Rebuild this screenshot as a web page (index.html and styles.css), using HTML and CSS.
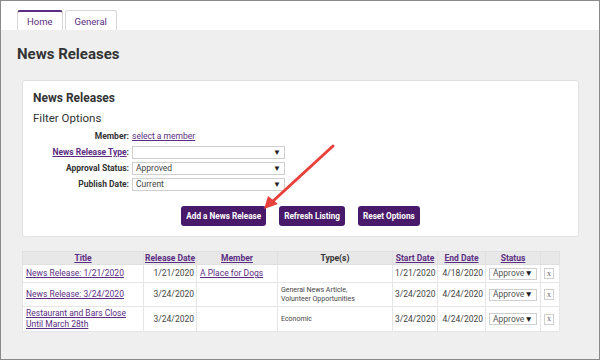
FILE: index.html
```html
<!DOCTYPE html>
<html>
<head>
    <meta name="viewport" content="width=device-width, initial-scale=1.0">
    <title>News Releases</title>
    <link rel="stylesheet" href="styles.css">
</head>

<body>
    <div class="frame">
        <div class="tabs">
            <a class="tab active">Home</a>
            <a class="tab">General</a>
        </div>

        <div class="content">
            <h1>News Releases</h1>

            <div class="card">
                <h2>News Releases</h2>
                <h3>Filter Options</h3>

                <div class="filter-form">
                    <span class="label">Member:</span>
                    <span><a class="link">select a member</a></span>

                    <span class="label"><a class="link">News Release Type</a>:</span>
                    <span class="select"><span></span><i>&#9660;</i></span>

                    <span class="label">Approval Status:</span>
                    <span class="select"><span>Approved</span><i>&#9660;</i></span>

                    <span class="label">Publish Date:</span>
                    <span class="select"><span>Current</span><i>&#9660;</i></span>
                </div>

                <div class="buttons">
                    <button class="btn">Add a News Release</button>
                    <button class="btn">Refresh Listing</button>
                    <button class="btn">Reset Options</button>
                </div>
            </div>

            <table class="releases">
                <colgroup>
                    <col style="width:121px">
                    <col style="width:53px">
                    <col style="width:81px">
                    <col style="width:115px">
                    <col style="width:45px">
                    <col style="width:48px">
                    <col style="width:55px">
                    <col style="width:19px">
                </colgroup>
                <thead>
                    <tr>
                        <th><a class="link">Title</a></th>
                        <th><a class="link">Release Date</a></th>
                        <th><a class="link">Member</a></th>
                        <th>Type(s)</th>
                        <th><a class="link">Start Date</a></th>
                        <th><a class="link">End Date</a></th>
                        <th><a class="link">Status</a></th>
                        <th></th>
                    </tr>
                </thead>
                <tbody>
                    <tr class="row-1">
                        <td><a class="link">News Release: 1/21/2020</a></td>
                        <td class="num">1/21/2020</td>
                        <td><a class="link">A Place for Dogs</a></td>
                        <td class="types"></td>
                        <td class="num">1/21/2020</td>
                        <td class="num">4/18/2020</td>
                        <td><span class="status">Approve <i>&#9660;</i></span></td>
                        <td><span class="remove">x</span></td>
                    </tr>
                    <tr class="row-2">
                        <td><a class="link">News Release: 3/24/2020</a></td>
                        <td class="num">3/24/2020</td>
                        <td></td>
                        <td class="types">General News Article,<br>Volunteer Opportunities</td>
                        <td class="num">3/24/2020</td>
                        <td class="num">4/24/2020</td>
                        <td><span class="status">Approve <i>&#9660;</i></span></td>
                        <td><span class="remove">x</span></td>
                    </tr>
                    <tr class="row-3">
                        <td><a class="link">Restaurant and Bars Close Until March 28th</a></td>
                        <td class="num">3/24/2020</td>
                        <td></td>
                        <td class="types">Economic</td>
                        <td class="num">3/24/2020</td>
                        <td class="num">4/24/2020</td>
                        <td><span class="status">Approve <i>&#9660;</i></span></td>
                        <td><span class="remove">x</span></td>
                    </tr>
                </tbody>
            </table>
        </div>

        <!-- callout arrow drawn over the card -->
        <svg class="callout" width="600" height="360" viewBox="0 0 600 360">
            <line x1="333" y1="146" x2="272" y2="202" stroke="#e8413b" stroke-width="3" stroke-linecap="round"/>
            <polygon points="264,209 268,196 278,204" fill="#e8413b"/>
        </svg>
    </div>
</body>

</html>
```

FILE: styles.css
```css
html, body {
    margin: 0;
    padding: 0;
}

body {
    font-family: Roboto, "Liberation Sans", Arial, sans-serif;
    color: #333;
}

.frame {
    position: relative;
    width: 600px;
    height: 360px;
    box-sizing: border-box;
    border: 1px solid #8a8a8a;
    background-color: #efefef;
    overflow: hidden;
}

.tabs {
    display: flex;
    align-items: flex-end;
    gap: 2px;
    height: 29px;
    padding-left: 16px;
    background-color: #fff;
    box-sizing: border-box;
}

.tab {
    display: block;
    height: 20px;
    box-sizing: border-box;
    padding: 5px 9px 0;
    border: 1px solid #d6d6d6;
    border-bottom: none;
    border-radius: 3px 3px 0 0;
    font-size: 9.5px;
    color: #5b2d83;
    background-color: #fff;
}

.tab.active {
    border-top: 2px solid #5b2d83;
    padding-top: 4px;
}

.content {
    padding: 14px 20px 0 21px;
}

h1 {
    margin: 0 0 16px -5px;
    font-size: 15px;
    font-weight: 700;
    color: #333;
    line-height: 20px;
}

.card {
    width: 557px;
    box-sizing: border-box;
    background-color: #fff;
    border: 1px solid #e2e2e2;
    border-radius: 3px;
    padding: 9px 10px 10px 10px;
}

h2 {
    margin: 0;
    font-size: 12px;
    font-weight: 700;
    line-height: 16px;
    color: #333;
}

h3 {
    margin: 4px 0 2px;
    font-size: 11.5px;
    font-weight: 400;
    line-height: 16px;
    color: #333;
}

.filter-form {
    display: grid;
    grid-template-columns: 96px 153px;
    grid-auto-rows: 16px;
    column-gap: 3px;
    align-items: center;
    font-size: 8.5px;
}

.label {
    text-align: right;
    font-weight: 700;
    color: #333;
}

.link {
    color: #5b2d83;
    text-decoration: underline;
}

.select {
    display: flex;
    justify-content: space-between;
    align-items: center;
    height: 13px;
    box-sizing: border-box;
    border: 1px solid #cfcfcf;
    padding: 0 3px;
    font-size: 8.5px;
    color: #444;
}

.select i {
    font-style: normal;
    font-size: 8px;
    color: #222;
}

.buttons {
    display: flex;
    justify-content: center;
    gap: 13px;
    margin-top: 14px;
}

.btn {
    height: 20px;
    padding: 0 5px;
    border: none;
    border-radius: 3px;
    background-color: #4a1a6a;
    color: #fff;
    font-family: Roboto, "Liberation Sans", Arial, sans-serif;
    font-size: 8.2px;
    font-weight: 700;
}

.releases {
    margin-top: 14px;
    width: 537px;
    table-layout: fixed;
    border-collapse: collapse;
    font-size: 8.5px;
    background-color: #fff;
}

.releases th {
    height: 12px;
    padding: 0 1px;
    background-color: #e8e8e8;
    border: 1px solid #e0e0e0;
    font-weight: 700;
    text-align: center;
    white-space: nowrap;
    color: #333;
}

.releases td {
    padding: 0 3px;
    border: 1px solid #e6e6e6;
    color: #444;
    line-height: 11px;
}

.row-1 td {
    height: 17px;
}

.row-2 td {
    height: 23px;
}

.row-3 td {
    height: 24px;
}

.releases td.num {
    text-align: right;
    padding: 0 2px;
    white-space: nowrap;
}

.releases td.types {
    font-size: 7px;
    line-height: 8.5px;
}

.status {
    display: flex;
    justify-content: space-between;
    align-items: center;
    height: 12px;
    box-sizing: border-box;
    border: 1px solid #cfcfcf;
    padding: 0 3px;
    color: #555;
}

.status i {
    font-style: normal;
    font-size: 8.5px;
    color: #222;
}

.remove {
    display: flex;
    justify-content: center;
    align-items: center;
    width: 10px;
    height: 11px;
    box-sizing: border-box;
    border: 1px solid #cfcfcf;
    font-family: "Liberation Serif", serif;
    font-size: 8px;
    line-height: 8px;
    color: #666;
}

.callout {
    position: absolute;
    left: -1px;
    top: -1px;
    pointer-events: none;
}
```
